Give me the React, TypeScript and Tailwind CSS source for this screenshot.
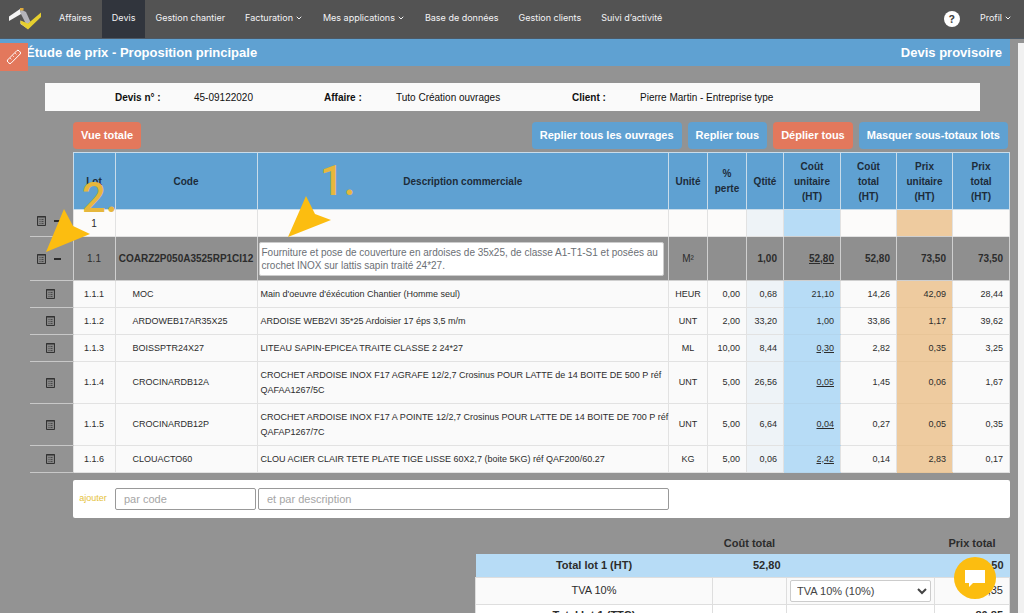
import { ChevronDown } from 'lucide-react'

const navLinks = [
  { label: 'Affaires' },
  { label: 'Devis', active: true },
  { label: 'Gestion chantier' },
  { label: 'Facturation', menu: true },
  { label: 'Mes applications', menu: true },
  { label: 'Base de données' },
  { label: 'Gestion clients' },
  { label: 'Suivi d’activité' },
]

const lines = [
  { lot: '1.1.1', code: 'MOC', desc: "Main d'oeuvre d'éxécution Chantier (Homme seul)", unit: 'HEUR', loss: '0,00', qty: '0,68', cu: '21,10', ct: '14,26', pu: '42,09', pt: '28,44' },
  { lot: '1.1.2', code: 'ARDOWEB17AR35X25', desc: 'ARDOISE WEB2VI 35*25 Ardoisier 17 éps 3,5 m/m', unit: 'UNT', loss: '2,00', qty: '33,20', cu: '1,00', ct: '33,86', pu: '1,17', pt: '39,62' },
  { lot: '1.1.3', code: 'BOISSPTR24X27', desc: 'LITEAU SAPIN-EPICEA TRAITE CLASSE 2 24*27', unit: 'ML', loss: '10,00', qty: '8,44', cu: '0,30', underline: true, ct: '2,82', pu: '0,35', pt: '3,25' },
  { lot: '1.1.4', code: 'CROCINARDB12A', desc: 'CROCHET ARDOISE INOX F17 AGRAFE 12/2,7 Crosinus POUR LATTE de 14 BOITE DE 500 P réf\nQAFAA1267/5C', unit: 'UNT', loss: '5,00', qty: '26,56', cu: '0,05', underline: true, ct: '1,45', pu: '0,06', pt: '1,67' },
  { lot: '1.1.5', code: 'CROCINARDB12P', desc: 'CROCHET ARDOISE INOX F17 A POINTE 12/2,7 Crosinus POUR LATTE DE 14 BOITE DE 700 P réf\nQAFAP1267/7C', unit: 'UNT', loss: '5,00', qty: '6,64', cu: '0,04', underline: true, ct: '0,27', pu: '0,05', pt: '0,35' },
  { lot: '1.1.6', code: 'CLOUACTO60', desc: 'CLOU ACIER CLAIR TETE PLATE TIGE LISSE 60X2,7 (boite 5KG) réf QAF200/60.27', unit: 'KG', loss: '5,00', qty: '0,06', cu: '2,42', underline: true, ct: '0,14', pu: '2,83', pt: '0,17' },
]

const headCell = 'border border-[#c9dcea] bg-[#5fa1d2] px-1.5 text-center text-[10px] leading-[15px] font-bold text-[#1d2c3a]'
const cell = 'border border-[#e2e2e2] px-1.5'

function Logo() {
  return (
    <svg className="h-[22px] w-[34px]" viewBox="0 0 34 22" aria-hidden="true">
      <path d="M1 8.500 12 1l1 5L1 13z" fill="#f4f4f4" />
      <path d="M12 1l6 3 4.500 10-4 3L13 6z" fill="#b4b4ba" />
      <path d="M12 0h3.500v2.500H12z" fill="#e0ac3e" />
      <path d="M12.500 12.500 18 16l2 5-7.500-5z" fill="#e3e3e3" />
      <path d="M20 15.500 33 4.500V9L20 21.500l-7.500-6v-3z" fill="#e6cf2f" />
    </svg>
  )
}

function SheetIcon() {
  return (
    <svg className="h-[10px] w-[9px]" viewBox="0 0 9 10" fill="none" stroke="#333" aria-hidden="true">
      <path d="M.5 .5h8v9h-8z" fill="#858585" />
      <path d="M0 1h9" />
      <path d="M2.500 3.500h1M4.500 3.500h2M2.500 5.500h1M4.500 5.500h2M2.500 7.500h1M4.500 7.500h2" stroke="#4a4a4a" />
    </svg>
  )
}

function RowTools({ collapsible = false }: { collapsible?: boolean }) {
  return (
    <div className={`flex items-center ${collapsible ? 'gap-2 pl-[7px]' : 'pl-4'}`}>
      <button type="button" aria-label="Détail de la ligne">
        <SheetIcon />
      </button>
      {collapsible && (
        <button type="button" aria-label="Replier" className="h-0.5 w-[7px] bg-[#2b2b2b]" />
      )}
    </div>
  )
}

function NavBar() {
  return (
    <header className="flex h-[39px] shrink-0 items-center border-b border-[#4c5966] bg-[#535353] pr-3 pl-2 font-['Inter',sans-serif] text-[9px] text-gray-100">
      <Logo />
      <nav className="ml-[7px] flex h-full items-center">
        {navLinks.map((l) => (
          <a
            key={l.label}
            href="#"
            className={`flex h-full items-center gap-0.5 px-2.5 pb-0.5 whitespace-nowrap ${l.active ? 'bg-[#31353d]' : ''}`}
          >
            {l.label}
            {l.menu && <ChevronDown className="h-2 w-2" strokeWidth={3} aria-hidden="true" />}
          </a>
        ))}
      </nav>
      <a href="#" aria-label="Aide" className="ml-auto flex h-4 w-4 items-center justify-center rounded-full bg-white text-[11px] font-bold text-[#444]">
        ?
      </a>
      <a href="#" className="ml-5 flex items-center gap-0.5 pb-0.5">
        Profil
        <ChevronDown className="h-2 w-2" strokeWidth={3} aria-hidden="true" />
      </a>
    </header>
  )
}

function Toolbar() {
  const btn = 'h-[27px] rounded-sm px-2 text-[11px] font-bold text-white'
  return (
    <div className="mt-[11px] mr-0.5 ml-[73px] flex items-center gap-1.5">
      <button type="button" className={`${btn} mr-auto bg-[#e3785c]`}>Vue totale</button>
      <button type="button" className={`${btn} bg-[#5fa1d2]`}>Replier tous les ouvrages</button>
      <button type="button" className={`${btn} bg-[#5fa1d2]`}>Replier tous</button>
      <button type="button" className={`${btn} bg-[#e3785c]`}>Déplier tous</button>
      <button type="button" className={`${btn} bg-[#5fa1d2]`}>Masquer sous-totaux lots</button>
    </div>
  )
}

function QuoteTable() {
  return (
    <table className="w-full table-fixed border-collapse text-[9px] leading-[15px] text-[#2c2c2c]">
      <colgroup>
        <col className="w-[43px]" />
        <col className="w-[42px]" />
        <col className="w-[142px]" />
        <col />
        <col className="w-[39px]" />
        <col className="w-[39px]" />
        <col className="w-[37px]" />
        <col className="w-[57px]" />
        <col className="w-[56px]" />
        <col className="w-[56px]" />
        <col className="w-[57px]" />
      </colgroup>
      <thead>
        <tr className="h-[57px]">
          <td />
          <th className={headCell}>Lot</th>
          <th className={headCell}>Code</th>
          <th className={headCell}>Description commerciale</th>
          <th className={headCell}>Unité</th>
          <th className={headCell}>% perte</th>
          <th className={headCell}>Qtité</th>
          <th className={headCell}>Coût unitaire (HT)</th>
          <th className={headCell}>Coût total (HT)</th>
          <th className={headCell}>Prix unitaire (HT)</th>
          <th className={headCell}>Prix<br />total<br />(HT)</th>
        </tr>
      </thead>
      <tbody>
        <tr className="h-[27px] bg-[#fcfbfa]">
          <td className="border-b border-[#c8c8c8] bg-[#939393] pb-1"><RowTools collapsible /></td>
          <td className={`${cell} text-center text-[10px]`}>1</td>
          <td className={cell} />
          <td className={cell} />
          <td className={cell} />
          <td className={cell} />
          <td className={`${cell} bg-[#eef3f7]`} />
          <td className="bg-[#b7dcf6]" />
          <td className={cell} />
          <td className="bg-[#eecb9f]" />
          <td className={cell} />
        </tr>
        <tr className="h-[44px] bg-[#8f8f8f] text-right text-[10px] font-bold">
          <td className="border-y border-[#c8c8c8] bg-[#939393]"><RowTools collapsible /></td>
          <td className="border border-[#cfcfcf] text-center font-normal">1.1</td>
          <td className="border border-[#cfcfcf] text-center">COARZ2P050A3525RP1CI12</td>
          <td className="border border-[#cfcfcf] p-px text-left">
            <textarea
              aria-label="Description commerciale"
              className="block h-[34px] w-[calc(100%-3px)] resize-none overflow-hidden rounded-xs border border-[#ccc] bg-white px-0.5 py-[3px] text-[10px] leading-[13px] font-normal text-[#6b6f75]"
              defaultValue="Fourniture et pose de couverture en ardoises de 35x25, de classe A1-T1-S1 et posées au crochet INOX sur lattis sapin traité 24*27."
            />
          </td>
          <td className="border border-[#cfcfcf] text-center font-normal">M²</td>
          <td className="border border-[#cfcfcf]" />
          <td className="border border-[#cfcfcf] px-1.5">1,00</td>
          <td className="border border-[#cfcfcf] px-1.5 underline">52,80</td>
          <td className="border border-[#cfcfcf] px-1.5">52,80</td>
          <td className="border border-[#cfcfcf] px-1.5">73,50</td>
          <td className="border border-[#cfcfcf] px-1.5">73,50</td>
        </tr>
        {lines.map((l) => (
          <tr key={l.lot} className={`bg-[#fafafa] text-right ${l.desc.length > 80 ? 'h-[42px]' : 'h-[27px]'}`}>
            <td className="border-y border-[#c8c8c8] bg-[#939393]"><RowTools /></td>
            <td className={`${cell} text-center`}>{l.lot}</td>
            <td className={`${cell} pl-[17px] text-left`}>{l.code}</td>
            <td className="border border-[#e2e2e2] pl-[3px] text-left whitespace-pre">{l.desc}</td>
            <td className="border border-[#e2e2e2] text-center">{l.unit}</td>
            <td className={cell}>{l.loss}</td>
            <td className={`${cell} bg-[#eef3f7]`}>{l.qty}</td>
            <td className="border-y border-[#b3d5ed] bg-[#b7dcf6] px-1.5">
              <span className={l.underline ? 'underline' : ''}>{l.cu}</span>
            </td>
            <td className={cell}>{l.ct}</td>
            <td className="border-y border-[#e8c598] bg-[#eecb9f] px-1.5">{l.pu}</td>
            <td className={cell}>{l.pt}</td>
          </tr>
        ))}
      </tbody>
    </table>
  )
}

function Totals() {
  return (
    <table className="mt-[15px] ml-auto w-[535px] table-fixed border-collapse text-[11px] text-[#2c2c2c]">
      <colgroup>
        <col />
        <col className="w-[74px]" />
        <col className="w-[148px]" />
        <col className="w-[75px]" />
      </colgroup>
      <thead>
        <tr className="h-[21px]">
          <td />
          <th className="text-center">Coût total</th>
          <td />
          <th className="text-center">Prix total</th>
        </tr>
      </thead>
      <tbody>
        <tr className="h-[23px] bg-[#b7dcf6] text-right font-bold">
          <td className="text-center">Total lot 1 (HT)</td>
          <td className="px-1.5">52,80</td>
          <td />
          <td className="px-1.5">73,50</td>
        </tr>
        <tr className="h-[27px] bg-[#fafafa] text-right">
          <td className="border border-[#dedede] text-center">TVA 10%</td>
          <td className="border border-[#dedede]" />
          <td className="border border-[#dedede] px-[3px]">
            <select aria-label="Taux de TVA" className="block h-[22px] w-full rounded-xs border border-[#ccc] bg-white pl-0.5 text-[11px] text-[#444]">
              <option>TVA 10% (10%)</option>
            </select>
          </td>
          <td className="border border-[#dedede] px-1.5">7,35</td>
        </tr>
        <tr className="h-[23px] bg-white text-right font-bold">
          <td className="border border-[#dedede] text-center">Total lot 1 (TTC)</td>
          <td className="border border-[#dedede]" />
          <td className="border border-[#dedede]" />
          <td className="border border-[#dedede] px-1.5">80,85</td>
        </tr>
      </tbody>
    </table>
  )
}

// Tutorial marks drawn over the page
function Marks() {
  return (
    <div className="pointer-events-none absolute inset-0 font-['Roboto',sans-serif] text-[42px] leading-none font-medium text-[#e6b73c]" aria-hidden="true">
      <span className="absolute top-[177px] left-[82px]">2.</span>
      <span className="absolute top-[160px] left-[320px]">1.</span>
      <svg className="absolute top-[195px] left-[287px] h-[44px] w-[46px]" viewBox="0 0 46 44" fill="#fcbd10">
        <path d="M19 1 28 19 44 25 1 42z" />
      </svg>
      <svg className="absolute top-[208px] left-[45px] h-[46px] w-[46px]" viewBox="0 0 46 46" fill="#fcbd10">
        <path d="M19 1 28 18 45 26 1 44z" />
      </svg>
    </div>
  )
}

export default function App() {
  return (
    <div className="relative flex h-screen flex-col overflow-hidden bg-[#939393] font-['Liberation_Sans',Arial,sans-serif]">
      <NavBar />
      <div className="flex min-h-0 flex-1">
        <main className="min-w-0 flex-1 overflow-hidden pr-2">
          <div className="flex h-[27px] items-center justify-between bg-[#5fa1d2] pr-2 pl-[26px] text-[13px] font-bold text-white">
            <h1>Étude de prix - Proposition principale</h1>
            <span>Devis provisoire</span>
          </div>

          <dl className="mt-[17px] mr-[30px] ml-[45px] flex h-[28px] items-center bg-[#fafafa] pl-[70px] text-[10px] text-[#111]">
            <dt className="w-[79px] font-bold">Devis n° :</dt>
            <dd className="w-[130px]">45-09122020</dd>
            <dt className="w-[72px] font-bold">Affaire :</dt>
            <dd className="w-44">Tuto Création ouvrages</dd>
            <dt className="w-[68px] font-bold">Client :</dt>
            <dd>Pierre Martin - Entreprise type</dd>
          </dl>

          <Toolbar />

          <div className="mt-[3px] pl-[30px]">
            <QuoteTable />
          </div>

          <form className="mt-[7px] ml-[73px] flex h-[38px] items-center gap-0.5 rounded-xs bg-white text-[11px]">
            <button type="button" className="w-10 text-center text-[9px] text-[#e5c23a]">ajouter</button>
            <input aria-label="par code" placeholder="par code" className="h-[22px] w-[141px] rounded-xs border border-[#999] px-2 placeholder:text-[#a5a5a5]" />
            <input aria-label="et par description" placeholder="et par description" className="mr-[341px] h-[22px] min-w-0 flex-1 rounded-xs border border-[#999] px-2 placeholder:text-[#a5a5a5]" />
          </form>

          <Totals />
        </main>
        <div className="mt-1 w-1.5 bg-[#f1f1f1]" />
      </div>

      <button
        type="button"
        aria-label="Outils"
        className="absolute top-[43px] left-0 flex h-7 w-7 items-center justify-center bg-[#e3785c]"
      >
        <svg className="h-4 w-4" viewBox="0 0 16 16" fill="none" stroke="#fff" aria-hidden="true">
          <path d="M1.500 11 11 1.500Q12 .8 13 1.800L14.200 3Q15 4 14.200 5L5 14.200Q4 15 3 14.200L1.800 13Q1 12 1.500 11z" />
          <path d="M4 9l1.500 1.500M6.500 6.500 8 8M9 4l1.500 1.500" strokeWidth=".7" />
        </svg>
      </button>

      <Marks />

      <button
        type="button"
        aria-label="Discussion"
        className="absolute right-7 bottom-3.5 flex h-[42px] w-[42px] items-center justify-center rounded-full bg-[#fcbd10]"
      >
        <svg className="h-[18px] w-[22px]" viewBox="0 0 22 18" fill="#fff" aria-hidden="true">
          <path d="M1 1h20v13H9l-4 4v-4H1z" />
        </svg>
      </button>
    </div>
  )
}
